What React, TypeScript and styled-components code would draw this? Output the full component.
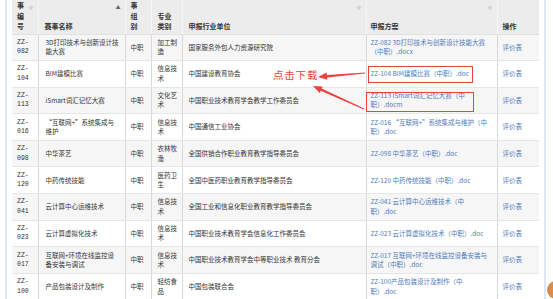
import React from 'react';
import styled, { createGlobalStyle } from 'styled-components';

const GlobalStyle = createGlobalStyle`
  body {
    margin: 0;
    background: #fff;
    font-family: "Noto Sans CJK SC", "Noto Sans", sans-serif;
    color: #333;
  }
`;

const Page = styled.div`
  position: relative;
  display: flex;
  height: 299px;
  overflow: hidden;
  padding-left: 5px;
`;

const Panel = styled.div`
  width: 541px;
  box-sizing: border-box;
  border-left: 2px solid #dde7f3;
  border-right: 2px solid #dde7f3;
  padding: 0 5px;
`;

const Table = styled.table`
  width: 527px;
  table-layout: fixed;
  border-collapse: collapse;
`;

const HeadRow = styled.tr`
  height: 33px;
`;

const Th = styled.th<{ $pad?: number }>`
  position: relative;
  background: #ececec;
  font-size: 7px;
  line-height: 10.5px;
  font-weight: 700;
  color: #333;
  text-align: left;
  vertical-align: bottom;
  padding: 0 3px 2px ${({ $pad = 5 }) => $pad}px;
  border-right: 1px solid #f6f6f6;
  border-bottom: 1px solid #e2e2e2;
  &:last-child {
    border-right: none;
  }
`;

const Sort = styled.span<{ $on?: boolean }>`
  position: absolute;
  top: 4px;
  right: 4px;
  font-size: 5px;
  line-height: 6px;
  font-weight: 400;
  color: ${({ $on }) => ($on ? '#666' : '#d4d4d4')};
`;

const Row = styled.tr`
  height: 26.6px;
  &:nth-child(odd) td {
    background: #f6f6f6;
  }
`;

const Td = styled.td<{ $pad?: number; $right?: number; $mono?: boolean }>`
  font-size: 6.5px;
  line-height: 9.5px;
  font-family: ${({ $mono }) =>
    $mono ? '"Liberation Mono", "Noto Sans CJK SC", monospace' : '"Noto Sans CJK SC", sans-serif'};
  color: #333;
  vertical-align: middle;
  padding: 2px ${({ $right = 4 }) => $right}px 2px ${({ $pad = 6 }) => $pad}px;
  border-right: 1px solid #d9d9d9;
  border-bottom: 1px solid #e6e6e6;
  &:last-child {
    border-right: none;
  }
`;

const Link = styled.a`
  color: #4f7abb;
  text-decoration: none;
`;

const Overlay = styled.svg`
  position: absolute;
  left: 0;
  top: 0;
  pointer-events: none;
`;

const Note = styled.span`
  position: absolute;
  left: 273px;
  top: 68px;
  font-size: 10.5px;
  line-height: 14px;
  letter-spacing: 0.8px;
  color: #e8433e;
`;

const Widget = styled.div`
  position: absolute;
  left: 547px;
  top: 281px;
  width: 18px;
  height: 18px;
  border-radius: 50%;
  background: #d98c4f;
  filter: blur(0.6px);
`;

const widths = [26, 87, 26, 31, 184, 131, 42];

type Item = {
  no: string;
  name: string;
  group: string;
  kind: string;
  unit: string;
  plan: string;
};

const rows: Item[] = [
  { no: 'ZZ-082', name: '3D打印技术与创新设计技能大赛', group: '中职', kind: '加工制造', unit: '国家服务外包人力资源研究院', plan: 'ZZ-082 3D打印技术与创新设计技能大赛（中职）.docx' },
  { no: 'ZZ-104', name: 'BIM建模比赛', group: '中职', kind: '信息技术', unit: '中国建设教育协会', plan: 'ZZ-104 BIM建模比赛（中职）.doc' },
  { no: 'ZZ-113', name: 'iSmart词汇记忆大赛', group: '中职', kind: '文化艺术', unit: '中国职业技术教育学会教学工作委员会', plan: 'ZZ-113 iSmart词汇记忆大赛（中职）.docm' },
  { no: 'ZZ-016', name: '“互联网+”系统集成与维护', group: '中职', kind: '信息技术', unit: '中国通信工业协会', plan: 'ZZ-016 “互联网+”系统集成与维护（中职）.doc' },
  { no: 'ZZ-098', name: '中华茶艺', group: '中职', kind: '农林牧渔', unit: '全国供销合作职业教育教学指导委员会', plan: 'ZZ-098 中华茶艺（中职）.doc' },
  { no: 'ZZ-120', name: '中药传统技能', group: '中职', kind: '医药卫生', unit: '全国中医药职业教育教学指导委员会', plan: 'ZZ-120 中药传统技能（中职）.doc' },
  { no: 'ZZ-041', name: '云计算中心运维技术', group: '中职', kind: '信息技术', unit: '全国工业和信息化职业教育教学指导委员会', plan: 'ZZ-041 云计算中心运维技术（中职）.doc' },
  { no: 'ZZ-023', name: '云计算虚拟化技术', group: '中职', kind: '信息技术', unit: '中国职业技术教育学会信息化工作委员会', plan: 'ZZ-023 云计算虚拟化技术（中职）.doc' },
  { no: 'ZZ-017', name: '互联网+环境在线监控设备安装与调试', group: '中职', kind: '信息技术', unit: '中国职业技术教育学会中等职业技术 教育分会', plan: 'ZZ-017 互联网+环境在线监控设备安装与调试（中职）.doc' },
  { no: 'ZZ-100', name: '产品包装设计及制作', group: '中职', kind: '轻纺食品', unit: '中国包装联合会', plan: 'ZZ-100产品包装设计及制作（中职）.doc' },
];

// keep the file extension glued to the closing bracket when the name wraps
const glue = (s: string) => s.replace('）.', '）\u2060.');

// tapered red arrow from (x1,y1) to the tip (x2,y2)
const arrow = (x1: number, y1: number, x2: number, y2: number) => {
  const dx = x2 - x1;
  const dy = y2 - y1;
  const len = Math.hypot(dx, dy);
  const ux = dx / len;
  const uy = dy / len;
  const nx = -uy;
  const ny = ux;
  const head = 9;
  const bx = x2 - ux * head;
  const by = y2 - uy * head;
  const p = (x: number, y: number) => `${x.toFixed(1)},${y.toFixed(1)}`;
  return [
    p(x1 + nx * 0.4, y1 + ny * 0.4),
    p(bx + nx * 1.2, by + ny * 1.2),
    p(bx + nx * 3.6, by + ny * 3.6),
    p(x2, y2),
    p(bx - nx * 3.6, by - ny * 3.6),
    p(bx - nx * 1.2, by - ny * 1.2),
    p(x1 - nx * 0.4, y1 - ny * 0.4),
  ].join(' ');
};

export default function App() {
  return (
    <>
      <GlobalStyle />
      <Page>
        <Panel>
          <Table>
            <colgroup>
              {widths.map((w, i) => (
                <col key={i} style={{ width: w }} />
              ))}
            </colgroup>
            <thead>
              <HeadRow>
                <Th>
                  事<br />编<br />号<Sort>◆</Sort>
                </Th>
                <Th $pad={6}>
                  赛事名称<Sort $on>▲</Sort>
                </Th>
                <Th>
                  事<br />组<br />别
                </Th>
                <Th $pad={6}>
                  专业<br />类别
                </Th>
                <Th $pad={6}>
                  申报行业单位<Sort>◆</Sort>
                </Th>
                <Th $pad={4}>
                  申报方案<Sort>◆</Sort>
                </Th>
                <Th>操作</Th>
              </HeadRow>
            </thead>
            <tbody>
              {rows.map((r) => (
                <Row key={r.no}>
                  <Td $pad={5} $mono>
                    {r.no}
                  </Td>
                  <Td $pad={7}>{r.name}</Td>
                  <Td $pad={5}>{r.group}</Td>
                  <Td $pad={6}>{r.kind}</Td>
                  <Td $pad={6}>{r.unit}</Td>
                  <Td $pad={4} $right={8}>
                    <Link href="#">{glue(r.plan)}</Link>
                  </Td>
                  <Td $pad={5}>
                    <Link href="#">评价表</Link>
                  </Td>
                </Row>
              ))}
            </tbody>
          </Table>
        </Panel>
        <Note>点击下载</Note>
        <Overlay width="553" height="299" viewBox="0 0 553 299">
          <rect x="368.5" y="66.5" width="104" height="16" fill="none" stroke="#e8433e" strokeWidth="1" />
          <rect x="366.5" y="92.5" width="107" height="19" fill="none" stroke="#e8433e" strokeWidth="1" />
          <polygon points={arrow(365, 73, 318, 77)} fill="#e8433e" />
          <polygon points={arrow(364, 109, 313, 86)} fill="#e8433e" />
        </Overlay>
        <Widget />
      </Page>
    </>
  );
}
